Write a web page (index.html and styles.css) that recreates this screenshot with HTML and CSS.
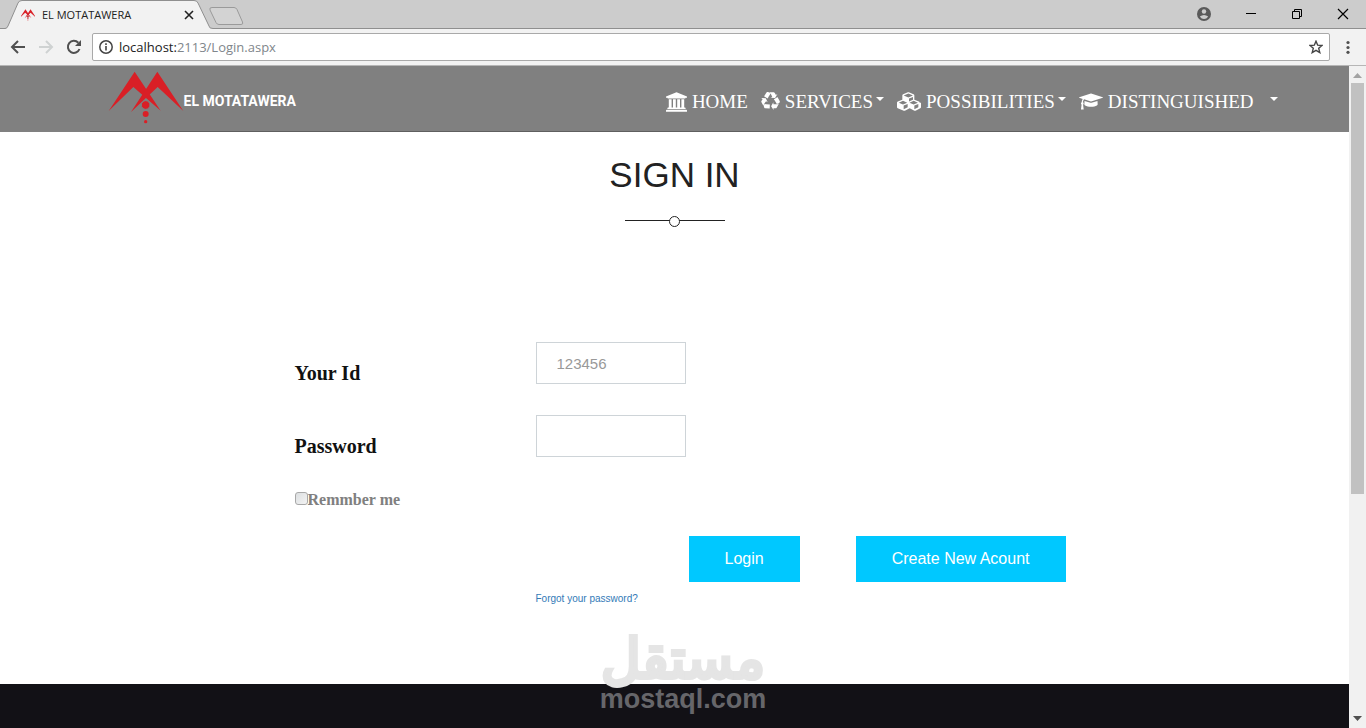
FILE: index.html
```
<!DOCTYPE html>
<html lang="en">
<head>
    <meta charset="UTF-8">
    <meta name="viewport" content="width=device-width, initial-scale=1.0">
    <title>EL MOTATAWERA</title>
    <link rel="stylesheet" href="styles.css">
</head>
<body>

<!-- Browser tabs -->
<div class="tab-strip">
    <div class="tab">
        <svg class="tab-shape" viewBox="0 0 208 29" aria-hidden="true"><path d="M0 28.500h1Q2 28 3 26L13 3Q14 .5 17 .5H189Q192 .5 193 3L204 26Q205 28.500 208 28.500V29H0z" fill="#f2f2f2"/><path d="M0 28.500Q2 28.500 3 26L13 3Q14 .5 17 .5H189Q192 .5 193 3L204 26Q204 28.500 208 28.500" fill="none" stroke="#8f8f8f"/></svg>
        <svg class="favicon" viewBox="75 22 188 160" aria-hidden="true"><use href="#logo-mark"/></svg>
        <span class="tab-title">EL MOTATAWERA</span>
        <button class="icon-button tab-close" aria-label="Close tab"><svg width="10" height="10" viewBox="0 0 10 10"><path d="M1 1l8 8M9 1L1 9" stroke="#222" stroke-width="1.600"/></svg></button>
    </div>
    <button class="icon-button new-tab" aria-label="New tab"><svg width="35" height="18" viewBox="0 0 35 18"><path d="M3 .5H25Q27 .5 28 2.500L33.500 15Q34.500 17.500 32 17.500H10Q8 17.500 7 15.500L1 3Q0 .5 3 .5z" fill="#d3d3d3" stroke="#9a9a9a"/></svg></button>
    <div class="window-buttons">
        <button class="icon-button" aria-label="Profile"><svg width="14" height="14" viewBox="0 0 14 14"><circle cx="7" cy="7" r="7" fill="#5a5a5a"/><circle cx="7" cy="4.500" r="2.200" fill="#ccc"/><path d="M2.800 9.500Q7 6.500 11.200 9.500Q9.500 12 7 12T2.800 9.500z" fill="#ccc"/></svg></button>
        <button class="icon-button" aria-label="Minimize"><svg width="12" height="12" viewBox="0 0 12 12"><path d="M1 5.500h10" stroke="#000"/></svg></button>
        <button class="icon-button" aria-label="Restore"><svg width="12" height="12" viewBox="0 0 12 12"><path d="M1.500 3.500h7v7h-7zM3.500 3V1.500h7v7H9" fill="none" stroke="#000"/></svg></button>
        <button class="icon-button" aria-label="Close"><svg width="12" height="12" viewBox="0 0 12 12"><path d="M1 1l10 10M11 1L1 11" stroke="#000" stroke-width="1.200"/></svg></button>
    </div>
</div>

<!-- Browser toolbar -->
<div class="toolbar">
    <button class="icon-button" aria-label="Back"><svg width="16" height="16" viewBox="0 0 16 16"><path d="M15 8H2M8 2L2 8l6 6" fill="none" stroke="#505050" stroke-width="2"/></svg></button>
    <button class="icon-button" aria-label="Forward"><svg width="16" height="16" viewBox="0 0 16 16"><path d="M1 8h13M8 2l6 6-6 6" fill="none" stroke="#cfd2d2" stroke-width="2"/></svg></button>
    <button class="icon-button" aria-label="Reload"><svg width="16" height="16" viewBox="0 0 16 16"><path d="M13.500 10A6 6 0 1 1 12.300 3.800" fill="none" stroke="#505050" stroke-width="2"/><path d="M15 1v6H9z" fill="#505050"/></svg></button>
    <div class="address-bar">
        <svg width="14" height="14" viewBox="0 0 14 14" aria-hidden="true"><circle cx="7" cy="7" r="6.200" fill="none" stroke="#444" stroke-width="1.500"/><path d="M7 6v4.500M7 3.300v1.600" stroke="#444" stroke-width="1.600"/></svg>
        <span class="url">localhost:<span class="url-path">2113/Login.aspx</span></span>
        <button class="icon-button" aria-label="Bookmark"><svg width="14" height="14" viewBox="0 0 14 14"><path d="M7 1.200l1.700 4 4.300.3-3.300 2.800 1.100 4.300L7 10.300l-3.800 2.300 1.100-4.300L1 5.500l4.300-.3z" fill="none" stroke="#444" stroke-width="1.400"/></svg></button>
    </div>
    <button class="icon-button menu-button" aria-label="Menu"><svg width="4" height="14" viewBox="0 0 4 14"><g fill="#505050"><circle cx="2" cy="2.500" r="1.600"/><circle cx="2" cy="7.500" r="1.600"/><circle cx="2" cy="12.300" r="1.600"/></g></svg></button>
</div>

<div class="viewport">
    <div class="page">
        <header class="navbar">
            <div class="container">
                <a class="brand" href="#">
                    <svg width="76" height="54" viewBox="55 20 228 162" aria-hidden="true">
                        <g id="logo-mark" fill="#d91f26">
                            <path d="M57 143L135 25 213 142 131 71z"/>
                            <path d="M281 143L203 25 124 146 204 71z"/>
                            <circle cx="168" cy="125" r="13" stroke="#808080" stroke-width="3"/>
                            <circle cx="168" cy="152" r="9"/>
                            <circle cx="168" cy="175" r="5"/>
                        </g>
                    </svg>
                    <span>EL MOTATAWERA</span>
                </a>
                <nav class="menu">
                    <a href="#"><svg width="21" height="20" viewBox="0 128 1920 1792" aria-hidden="true"><path d="M960 128l960 384v128h-128q0 26-20.500 45t-48.500 19H197q-28 0-48.500-19T128 640H0V512zM256 768h256v768h128V768h256v768h128V768h256v768h128V768h256v768h59q28 0 48.500 19t20.500 45v64H128v-64q0-26 20.500-45t48.500-19h59V768zm1595 960q28 0 48.500 19t20.500 45v128H0v-128q0-26 20.500-45t48.500-19h1782z"/></svg>HOME</a>
                    <a href="#"><svg width="19" height="19" viewBox="0 0 1792 1792" aria-hidden="true"><path d="M836 1169l-15 368-2 22-420-29q-36-3-67-31.500t-47-65.500q-11-27-14.500-55t4-65 12-55 21.500-64 19-53q78 12 509 28zM449 583l180 379-147-92q-63 72-111.500 144.500t-72.500 125-39.500 94.500-18.500 63l-4 21L46 962q-17-26-18-56t6-47l8-18q35-63 114-188L16 567zm1231 517l-188 359q-12 29-36.500 46.500t-43.500 20.500l-18 4q-71 7-219 12l8 164-230-367 211-362 7 173q170 16 283 5t170-33zM895 176q-47 63-265 435L313 424l-19-12 225-356q20-31 60-45t80-10q24 2 48.500 12t42 21 41.500 33 36 34.500 36 39.500 32 35zm655 307l212 363q18 37 12.500 76t-27.500 74q-13 20-33 37t-38 28-48.500 22-47 16-51.500 14-46 12q-34-72-265-436l313-195zM1407 279l142-83-220 373-419-20 151-86q-34-89-75-166t-75.500-123.500-64.500-80T799 46l-17-13 405 1q31-3 58 10.500t39 28.500l11 15q39 61 112 190z"/></svg>SERVICES<span class="caret"></span></a>
                    <a href="#"><svg width="24" height="19" viewBox="0 0 2304 1792" aria-hidden="true"><path d="M640 1632l384-192v-314l-384 164v342zm-64-454l404-173-404-173-404 173zm1088 454l384-192v-314l-384 164v342zm-64-454l404-173-404-173-404 173zm-448-293l384-165V454l-384 164v267zm-64-379l441-189-441-189-441 189zm1216 518v416q0 36-19 67t-52 47l-448 224q-25 14-57 14t-57-14l-448-224q-4-2-7-4-2 2-7 4l-448 224q-25 14-57 14t-57-14L71 1554q-33-16-52-47t-19-67v-416q0-38 21.500-70T78 906l434-186V320q0-38 21.500-70t56.500-48l448-192q23-10 50-10t50 10l448 192q35 16 56.500 48t21.500 70v400l434 186q36 16 57 48t21 70z"/></svg>POSSIBILITIES<span class="caret"></span></a>
                    <a href="#"><svg width="24" height="19" viewBox="0 0 2304 1792" aria-hidden="true"><path d="M1774 836l18 316q4 69-82 128t-235 93.500-323 34.500-323-34.500-235-93.500-82-128l18-316 574 181q22 7 48 7t48-7zm530-324q0 23-22 31L1162 895q-4 1-10 1t-10-1L490 689q-43 34-71 111.500T385 979q63 36 63 109 0 69-58 107l58 433q2 14-8 25-9 11-24 11H224q-15 0-24-11-10-11-8-25l58-433q-58-38-58-107 0-73 65-111 11-207 98-330L22 543q-22-8-22-31t22-31l1120-352q4-1 10-1t10 1l1120 352q22 8 22 31z"/></svg>DISTINGUISHED</a>
                    <a href="#" aria-label="More"><span class="caret"></span></a>
                </nav>
            </div>
        </header>

        <main class="login">
            <h1>SIGN IN</h1>
            <div class="divider"><span></span></div>

            <form class="login-form">
                <label for="userId">Your Id</label>
                <input class="field" type="text" id="userId" name="userId" placeholder="123456">

                <label for="password">Password</label>
                <input class="field" type="password" id="password" name="password">

                <div class="remember">
                    <input type="checkbox" id="remember" name="remember">
                    <label for="remember">Remmber me</label>
                </div>

                <div class="actions">
                    <button class="btn" type="submit">Login</button>
                    <button class="btn" type="button">Create New Acount</button>
                </div>

                <a class="forgot" href="#">Forgot your password?</a>
            </form>
        </main>

        <footer class="footer"></footer>
    </div>

    <!-- Scrollbar -->
    <div class="scrollbar">
        <svg width="9" height="5" viewBox="0 0 9 5" aria-hidden="true"><path d="M0 5l4.500-5L9 5z" fill="#a3a3a3"/></svg>
        <div class="thumb"></div>
        <svg width="9" height="5" viewBox="0 0 9 5" aria-hidden="true"><path d="M0 0h9L4.500 5z" fill="#505050"/></svg>
    </div>
</div>

<div class="watermark">
    <span class="watermark-ar" lang="ar" dir="rtl">مستقل</span>
    <span class="watermark-en">mostaql.com</span>
</div>

</body>
</html>
```
FILE: styles.css
```
* {
    box-sizing: border-box;
}

body {
    font-family: "Liberation Sans", Arial, sans-serif;
    background-color: #fff;
    margin: 0;
    display: flex;
    flex-direction: column;
    height: 100vh;
    overflow: hidden;
}

svg {
    display: block;
    flex-shrink: 0;
}

.icon-button {
    display: block;
    background: none;
    border: none;
    padding: 0;
    cursor: pointer;
}

/* Browser tabs */
.tab-strip {
    display: flex;
    align-items: center;
    height: 29px;
    padding-left: 5px;
    background-color: #ccc;
    border-bottom: 1px solid #8f8f8f;
}

.tab {
    position: relative;
    display: flex;
    align-items: center;
    width: 204px;
    height: 28px;
    padding: 1px 15px 0 16px;
    font-family: "Open Sans", "Noto Sans", sans-serif;
    font-size: 11px;
    color: #222;
}

.tab > * {
    position: relative;
}

.tab .tab-shape {
    position: absolute;
    top: 0;
    left: 0;
    width: 208px;
    height: 29px;
}

.favicon {
    width: 14px;
    height: 12px;
    margin-right: 7px;
}

.tab-close {
    margin-left: auto;
}

.new-tab {
    margin-top: 3px;
}

.window-buttons {
    display: flex;
    align-items: center;
    gap: 34px;
    margin-left: auto;
    padding-right: 17px;
}

/* Browser toolbar */
.toolbar {
    display: flex;
    align-items: center;
    gap: 12px;
    height: 37px;
    padding: 0 16px 0 10px;
    background-color: #f2f2f2;
    border-bottom: 1px solid #b6b6b6;
}

.address-bar {
    flex: 1;
    display: flex;
    align-items: center;
    gap: 6px;
    height: 28px;
    padding: 0 6px;
    margin-left: -2px;
    background-color: #fff;
    border: 1px solid #a9a9a9;
    border-radius: 2px;
}

.url {
    flex: 1;
    font-family: "Open Sans", "Noto Sans", sans-serif;
    font-size: 13px;
    color: #222;
}

.url-path {
    color: #80868b;
}

.menu-button {
    margin-left: 4px;
}

/* Page */
.viewport {
    flex: 1;
    display: flex;
    min-height: 0;
}

.page {
    flex: 1;
    display: flex;
    flex-direction: column;
    min-width: 0;
    overflow: hidden;
}

.container {
    max-width: 1170px;
    margin: 0 auto;
}

.navbar {
    background-color: #808080;
}

.navbar .container {
    display: flex;
    align-items: center;
    justify-content: space-between;
    height: 66px;
    padding-left: 18px;
    border-bottom: 1px solid #5f5f5f;
}

.brand {
    display: flex;
    align-items: center;
    padding-bottom: 3px;
    color: #fff;
    font-family: Roboto, "Liberation Sans", sans-serif;
    font-size: 14px;
    font-weight: bold;
    text-decoration: none;
}

.brand span {
    padding-top: 8px;
}

.menu {
    display: flex;
    gap: 13px;
    margin-right: -18px;
    padding-top: 6px;
}

.menu a {
    display: flex;
    align-items: center;
    color: #fff;
    font-family: "Liberation Serif", "Times New Roman", serif;
    font-size: 19px;
    line-height: 22px;
    text-decoration: none;
}

.menu svg {
    margin-right: 5px;
    fill: #fff;
}

.caret {
    margin: 0 0 6px 3px;
    border-top: 4px solid #fff;
    border-left: 4px solid transparent;
    border-right: 4px solid transparent;
}

.login {
    padding-bottom: 78px;
}

h1 {
    margin: 22px 0 0;
    color: #222;
    font-size: 35px;
    font-weight: normal;
    line-height: 42px;
    text-align: center;
}

.divider {
    display: flex;
    align-items: center;
    width: 100px;
    height: 11px;
    margin: 20px auto 115px;
    background: linear-gradient(#222, #222) 0 4px / 100% 1px no-repeat;
}

.divider span {
    width: 11px;
    height: 11px;
    margin: 0 auto;
    background-color: #fff;
    border: 1px solid #222;
    border-radius: 50%;
}

.login-form {
    display: grid;
    grid-template-columns: 241px 1fr;
    max-width: 1170px;
    margin: 0 auto;
    padding-left: 205px;
}

.login-form > label {
    height: 73px;
    padding-top: 20px;
    color: #111;
    font-family: "Liberation Serif", "Times New Roman", serif;
    font-size: 20px;
    font-weight: bold;
    line-height: 22px;
}

.field {
    width: 150px;
    height: 42px;
    padding: 0 20px;
    border: 1px solid #ced4d8;
    font-family: inherit;
    font-size: 15px;
}

.field::placeholder {
    color: #999;
}

.remember {
    grid-column: 1 / -1;
    display: flex;
    align-items: center;
    height: 20px;
    color: #808080;
    font-family: "Liberation Serif", "Times New Roman", serif;
    font-size: 16px;
    font-weight: bold;
}

.remember label {
    padding-top: 3px;
}

.remember input {
    appearance: none;
    width: 13px;
    height: 13px;
    margin: 0;
    background: linear-gradient(135deg, #dcdfe1, #f3f3f3);
    border: 1px solid #a8a8a8;
    border-radius: 3px;
}

.actions {
    grid-column: 2;
    display: flex;
    gap: 56px;
    margin-top: 28px;
    padding-left: 153px;
}

.btn {
    height: 46px;
    padding: 0 36px;
    background-color: #00c8ff;
    border: none;
    color: #fff;
    font-family: inherit;
    font-size: 16px;
    cursor: pointer;
}

.forgot {
    grid-column: 2;
    margin-top: 10px;
    color: #337ab7;
    font-size: 10px;
    line-height: 14px;
    text-decoration: none;
}

.footer {
    flex: 1;
    background-color: #121116;
}

/* Scrollbar */
.scrollbar {
    display: flex;
    flex-direction: column;
    align-items: center;
    width: 17px;
    padding: 7px 0;
    background-color: #f1f1f1;
}

.thumb {
    width: 13px;
    flex-basis: 411px;
    margin: 5px 0 auto;
    background-color: #c1c1c1;
}

/* Watermark over the page */
.watermark {
    position: absolute;
    left: 0;
    right: 0;
    bottom: 14px;
    display: flex;
    flex-direction: column;
    align-items: center;
    font-weight: bold;
    pointer-events: none;
}

.watermark-ar {
    color: #e5e5e5;
    font-family: "DejaVu Sans", sans-serif;
    font-size: 55px;
    font-weight: normal;
    line-height: 50px;
    -webkit-text-stroke: 4px #e5e5e5;
}

.watermark-en {
    color: #66666a;
    font-size: 27px;
    line-height: 30px;
}
```
